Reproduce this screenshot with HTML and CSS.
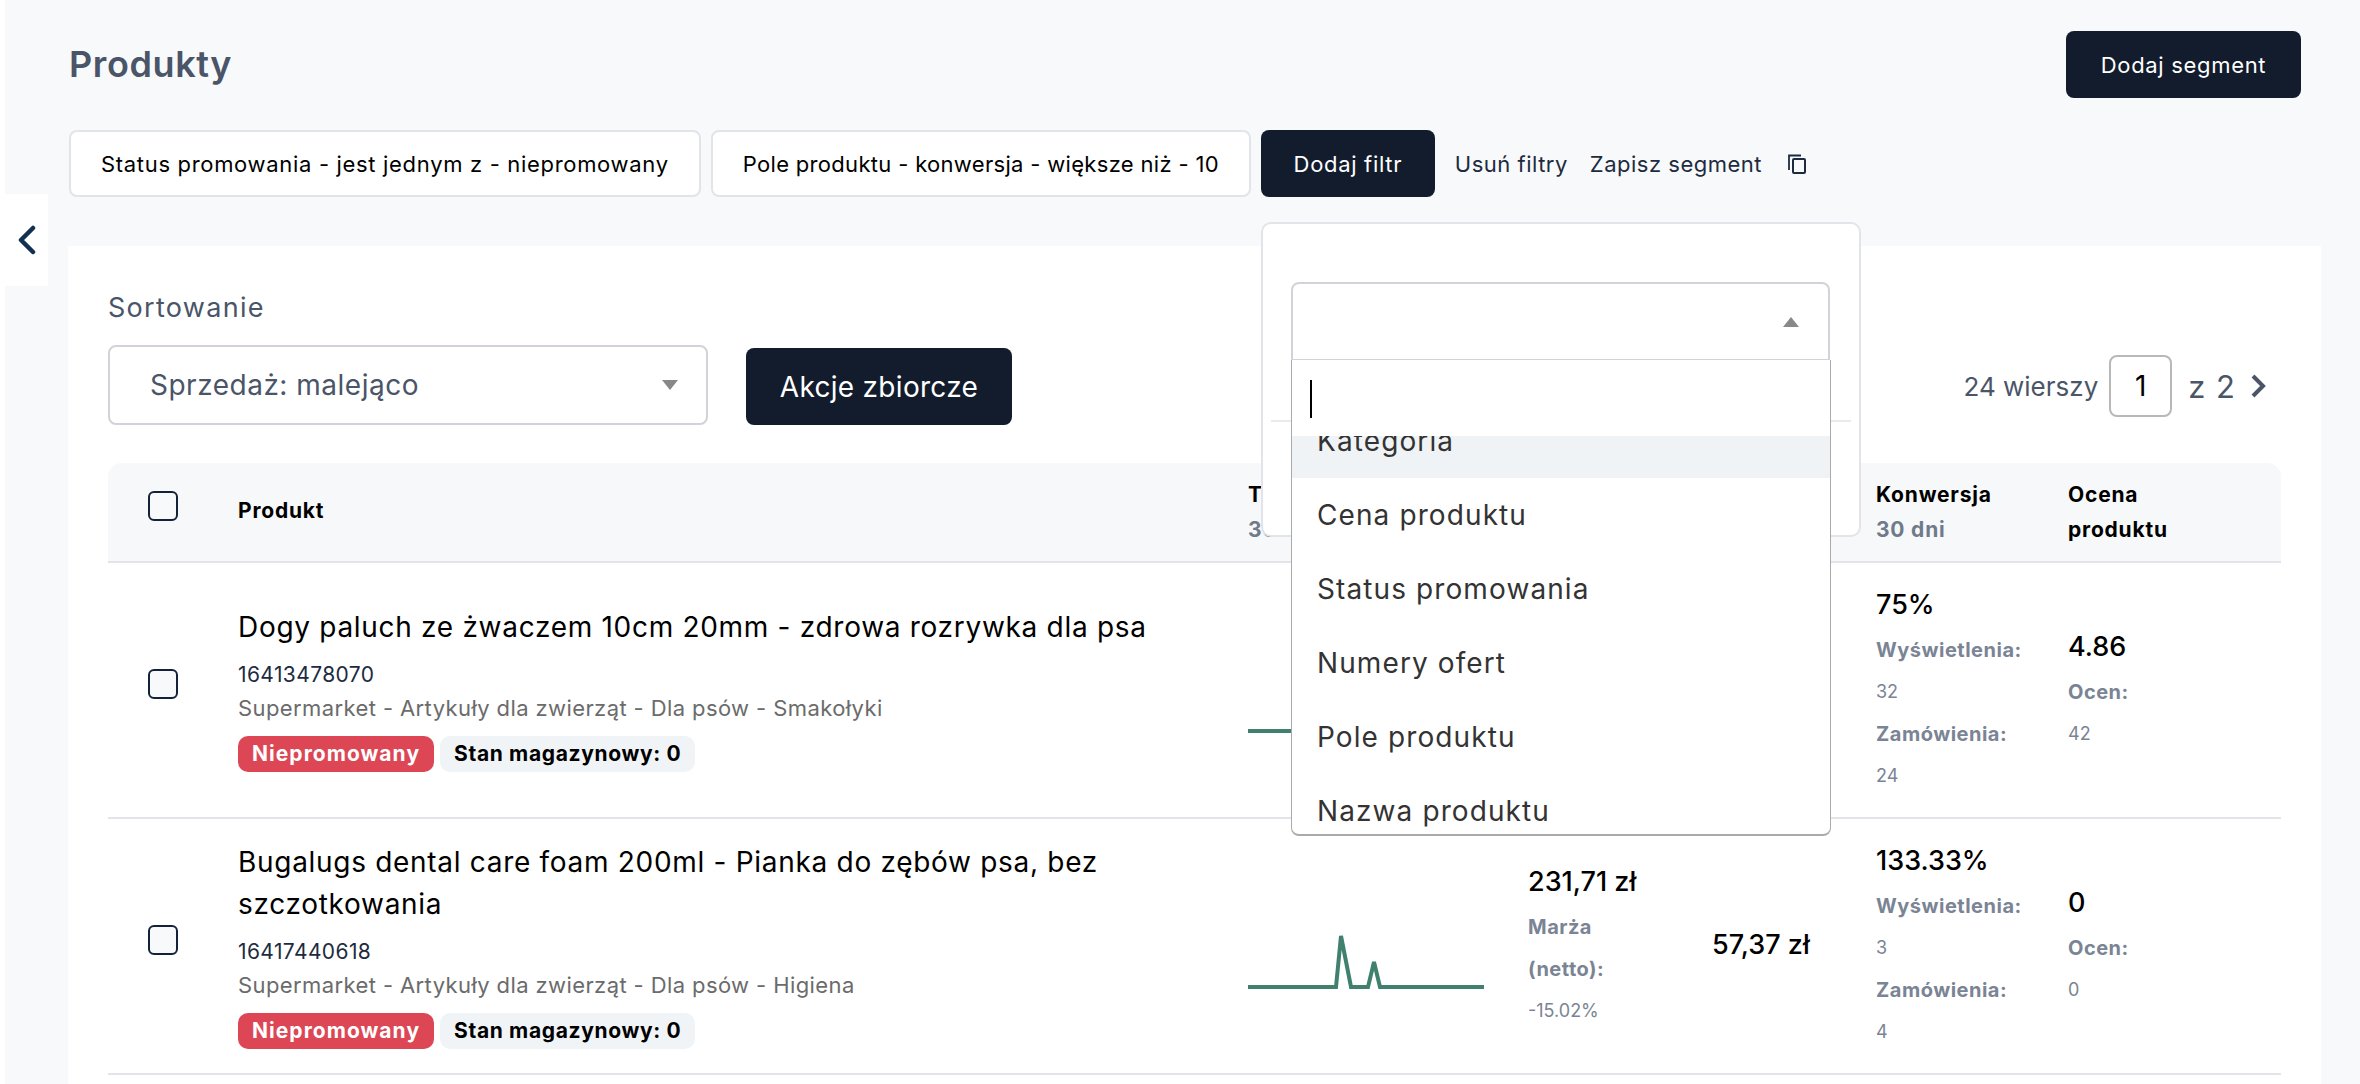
FILE: index.html
```html
<!DOCTYPE html>
<html>
	<head>
		<title>Produkty</title>
		<link rel="stylesheet" href="styles.css">
	</head>
	<body>
		<div class="edge"></div>
		<button class="side-toggle">
			<svg width="22" height="30" viewBox="0 0 22 30"><path d="M17 3 L5 15 L17 27" fill="none" stroke="#12304f" stroke-width="4.5" stroke-linecap="round" stroke-linejoin="round"/></svg>
		</button>

		<div class="page">
			<div class="top">
				<h1>Produkty</h1>
				<a class="btn btn-segment">Dodaj segment</a>
			</div>

			<div class="filters">
				<div class="chip">Status promowania - jest jednym z - niepromowany</div>
				<div class="chip chip-tight">Pole produktu - konwersja - większe niż - 10</div>
				<a class="btn btn-filter">Dodaj filtr</a>
				<a class="link link-remove">Usuń filtry</a>
				<a class="link link-save">Zapisz segment</a>
				<svg class="copy" width="18" height="20" viewBox="0 0 18 20"><path d="M1 16 V1.500 H13" fill="none" stroke="#1d2b40" stroke-width="1.800"/><rect x="5" y="5" width="12" height="14" rx="1" fill="none" stroke="#1d2b40" stroke-width="2"/></svg>
			</div>

			<div class="card">
				<div class="label">Sortowanie</div>
				<div class="toolbar">
					<div class="sort-select">Sprzedaż: malejąco<span class="arrow-down"></span></div>
					<a class="btn btn-bulk">Akcje zbiorcze</a>
					<div class="pager">
						<span>24 wierszy</span>
						<span class="page-input">1</span>
						<span class="pager-total">z 2</span>
						<svg width="18" height="26" viewBox="0 0 18 26"><path d="M4 3 L14 13 L4 23" fill="none" stroke="#4a5568" stroke-width="4"/></svg>
					</div>
				</div>

				<div class="grid head">
					<div class="cell-check"><span class="check"></span></div>
					<div class="head-single">Produkt</div>
					<div>Trend<small>30 dni</small></div>
					<div></div>
					<div></div>
					<div>Konwersja<small>30 dni</small></div>
					<div class="head-last">Ocena produktu</div>
				</div>

				<div class="grid row">
					<div class="cell-check"><span class="check"></span></div>
					<div class="product">
						<div class="name">Dogy paluch ze żwaczem 10cm 20mm - zdrowa rozrywka dla psa</div>
						<div class="offer">16413478070</div>
						<div class="path">Supermarket - Artykuły dla zwierząt - Dla psów - Smakołyki</div>
						<div class="tags"><span class="tag tag-red">Niepromowany</span><span class="tag">Stan magazynowy: 0</span></div>
					</div>
					<div class="chart">
						<svg width="236" height="60" viewBox="0 0 236 60"><path d="M0 53 H236" fill="none" stroke="#40806f" stroke-width="4"/></svg>
					</div>
					<div></div>
					<div></div>
					<div class="stats">
						<div class="big">75%</div>
						<div class="key">Wyświetlenia:</div>
						<div class="val">32</div>
						<div class="key">Zamówienia:</div>
						<div class="val">24</div>
					</div>
					<div class="stats">
						<div class="big">4.86</div>
						<div class="key">Ocen:</div>
						<div class="val">42</div>
					</div>
				</div>

				<div class="grid row">
					<div class="cell-check"><span class="check"></span></div>
					<div class="product">
						<div class="name">Bugalugs dental care foam 200ml - Pianka do zębów psa, bez szczotkowania</div>
						<div class="offer">16417440618</div>
						<div class="path">Supermarket - Artykuły dla zwierząt - Dla psów - Higiena</div>
						<div class="tags"><span class="tag tag-red">Niepromowany</span><span class="tag">Stan magazynowy: 0</span></div>
					</div>
					<div class="chart">
						<svg width="236" height="60" viewBox="0 0 236 60"><path d="M0 53 H88 L93 2 L103 53 H120 L126 28 L132 53 H236" fill="none" stroke="#40806f" stroke-width="4"/></svg>
					</div>
					<div class="stats">
						<div class="big">231,71 zł</div>
						<div class="key">Marża<br>(netto):</div>
						<div class="val">-15.02%</div>
					</div>
					<div class="stats"><div class="big">57,37 zł</div></div>
					<div class="stats">
						<div class="big">133.33%</div>
						<div class="key">Wyświetlenia:</div>
						<div class="val">3</div>
						<div class="key">Zamówienia:</div>
						<div class="val">4</div>
					</div>
					<div class="stats">
						<div class="big">0</div>
						<div class="key">Ocen:</div>
						<div class="val">0</div>
					</div>
				</div>
			</div>
		</div>

		<!-- filter popover with opened select -->
		<div class="popover">
			<div class="pop-select"><span class="arrow-up"></span></div>
			<div class="pop-line"></div>
		</div>
		<div class="dropdown">
			<div class="search"><span class="caret"></span></div>
			<div class="options">
				<div class="option option-active">Kategoria</div>
				<div class="option">Cena produktu</div>
				<div class="option">Status promowania</div>
				<div class="option">Numery ofert</div>
				<div class="option">Pole produktu</div>
				<div class="option">Nazwa produktu</div>
			</div>
		</div>
	</body>
</html>
```

FILE: styles.css
```css
html, body {
	margin: 0;
	height: 1084px;
	overflow: hidden;
}

body {
	background: #f8f9fb;
	font-family: "Inter", "Open Sans", sans-serif;
	color: #000;
	position: relative;
}

.edge {
	position: absolute;
	left: 0;
	top: 0;
	bottom: 0;
	width: 5px;
	background: #fff;
}

.side-toggle {
	position: absolute;
	left: 5px;
	top: 194px;
	width: 43px;
	height: 92px;
	border: 0;
	padding: 0;
	background: #fff;
	display: flex;
	align-items: center;
	justify-content: center;
}

.page {
	padding: 31px 59px 0 69px;
}

.top {
	display: flex;
	justify-content: space-between;
	align-items: center;
	height: 67px;
}

h1 {
	margin: -2px 0 0 0;
	font-size: 36px;
	font-weight: 600;
	letter-spacing: 0.6px;
	color: #4a5568;
}

.btn {
	display: flex;
	align-items: center;
	justify-content: center;
	background: #121c2d;
	color: #fff;
	border-radius: 8px;
	font-size: 22px;
	letter-spacing: 0.68px;
	box-sizing: border-box;
}

.btn-segment {
	width: 235px;
	height: 67px;
}

.filters {
	display: flex;
	align-items: center;
	margin-top: 32px;
	height: 67px;
}

.chip {
	height: 67px;
	box-sizing: border-box;
	display: flex;
	align-items: center;
	padding: 0 30px;
	background: #fff;
	border: 2px solid #e2e4ea;
	border-radius: 8px;
	font-size: 22px;
	letter-spacing: 0.68px;
	white-space: nowrap;
	margin-right: 10px;
}

.chip-tight {
	letter-spacing: 0.32px;
}

.btn-filter {
	width: 174px;
	height: 67px;
}

.link {
	font-size: 22px;
	letter-spacing: 0.5px;
	color: #1d2b40;
	white-space: nowrap;
}

.link-remove {
	margin-left: 20px;
}

.link-save {
	margin-left: 22px;
}

.copy {
	margin-left: 26px;
}

.card {
	margin: 49px -20px 0 -1px;
	background: #fff;
	padding: 40px 40px 0 40px;
	height: 900px;
}

.label {
	font-size: 27px;
	letter-spacing: 1.3px;
	color: #4a5568;
	line-height: 42px;
	padding-top: 1px;
}

.toolbar {
	display: flex;
	align-items: flex-end;
	margin-top: 16px;
	height: 80px;
}

.sort-select {
	width: 600px;
	height: 80px;
	box-sizing: border-box;
	border: 2px solid #d0d4da;
	border-radius: 8px;
	padding: 0 40px;
	display: flex;
	align-items: center;
	justify-content: space-between;
	font-size: 28px;
	letter-spacing: 0.5px;
	color: #4a5568;
}

.arrow-down {
	width: 0;
	height: 0;
	border: 8px solid transparent;
	border-top: 10px solid #888;
	border-bottom: 0;
	margin-right: -12px;
}

.btn-bulk {
	width: 266px;
	height: 77px;
	margin-left: 38px;
	font-size: 28px;
	letter-spacing: 0.3px;
}

.pager {
	margin-left: auto;
	display: flex;
	align-items: center;
	height: 62px;
	margin-bottom: 8px;
	margin-right: 14px;
	font-size: 26px;
	color: #4a5568;
}

.page-input {
	width: 63px;
	height: 62px;
	box-sizing: border-box;
	border: 2px solid #b8b8b8;
	border-radius: 8px;
	margin-left: 11px;
	display: flex;
	align-items: center;
	justify-content: center;
	font-size: 28px;
	color: #000;
}

.pager-total {
	margin-left: 16px;
	margin-right: 13px;
	font-size: 31px;
	letter-spacing: 1px;
}

.grid {
	display: grid;
	grid-template-columns: 130px 1010px 280px 184px 164px 192px 213px;
}

.head {
	margin-top: 38px;
	height: 100px;
	box-sizing: border-box;
	background: #f7f8fa;
	border-radius: 14px 14px 0 0;
	border-bottom: 2px solid #e2e4ea;
	font-size: 21px;
	letter-spacing: 0.8px;
	font-weight: 700;
	line-height: 35px;
	padding-top: 14px;
}

.head small {
	display: block;
	font-size: 21px;
	color: #6f7a8a;
}

.head-single {
	padding-top: 16px;
}

.head-last {
	padding-right: 60px;
}

.head .cell-check {
	align-items: flex-start;
	padding-top: 14px;
	padding-bottom: 0;
}

.cell-check {
	display: flex;
	align-items: center;
	padding-left: 40px;
	padding-bottom: 12px;
}

.check {
	width: 30px;
	height: 30px;
	box-sizing: border-box;
	border: 2px solid #14213a;
	border-radius: 6px;
	background: #f8f9fb;
}

.row {
	height: 256px;
	box-sizing: border-box;
	border-bottom: 2px solid #e2e4ea;
}

.product {
	display: flex;
	flex-direction: column;
	justify-content: center;
	padding-bottom: 3px;
}

.name {
	font-size: 28px;
	letter-spacing: 0.7px;
	line-height: 42px;
	padding-right: 60px;
	margin-bottom: 10px;
}

.offer {
	font-size: 21px;
	letter-spacing: 0.4px;
	line-height: 34px;
	color: #1d2b40;
}

.path {
	font-size: 22px;
	letter-spacing: 0.4px;
	line-height: 32px;
	color: #6b6b6b;
	margin-bottom: 12px;
}

.tags {
	display: flex;
	gap: 6px;
}

.tag {
	height: 36px;
	padding: 0 14px;
	display: flex;
	align-items: center;
	border-radius: 10px;
	background: #f1f4f7;
	font-size: 21px;
	letter-spacing: 0.65px;
	font-weight: 700;
}

.tag-red {
	background: #dc4655;
	color: #fff;
	letter-spacing: 1.05px;
}

.chart {
	display: flex;
	align-items: center;
	padding-top: 36px;
}

.stats {
	display: flex;
	flex-direction: column;
	justify-content: center;
}

.big {
	font-size: 27px;
	font-weight: 500;
	line-height: 42px;
	margin-bottom: 3px;
}

.key {
	font-size: 20px;
	letter-spacing: 0.5px;
	font-weight: 700;
	line-height: 42px;
	color: #7a8494;
}

.val {
	font-size: 18px;
	line-height: 42px;
	color: #7a8494;
}

.popover {
	position: absolute;
	left: 1261px;
	top: 222px;
	width: 600px;
	height: 315px;
	box-sizing: border-box;
	background: #fff;
	border: 2px solid #e2e4ea;
	border-radius: 10px;
	padding: 58px 29px 0 28px;
}

.pop-select {
	height: 80px;
	box-sizing: border-box;
	border: 2px solid #d0d4da;
	border-bottom-width: 3px;
	border-radius: 8px 8px 0 0;
	position: relative;
}

.arrow-up {
	position: absolute;
	right: 29px;
	top: 33px;
	width: 0;
	height: 0;
	border: 8px solid transparent;
	border-bottom: 10px solid #888;
	border-top: 0;
}

.pop-line {
	position: absolute;
	left: 8px;
	right: 8px;
	top: 196px;
	height: 2px;
	background: #e8eaee;
}

.dropdown {
	position: absolute;
	left: 1291px;
	top: 360px;
	width: 540px;
	height: 476px;
	box-sizing: border-box;
	background: #fff;
	border: 1px solid #aaa;
	border-top: 0;
	border-bottom-width: 2px;
	border-radius: 0 0 8px 8px;
	overflow: hidden;
	display: flex;
	flex-direction: column;
}

.search {
	height: 76px;
	flex: none;
	background: #fff;
	padding: 20px 0 0 18px;
	box-sizing: border-box;
	position: relative;
	z-index: 1;
}

.caret {
	display: block;
	width: 2px;
	height: 38px;
	background: #000;
}

.options {
	margin-top: -32px;
}

.option {
	height: 74px;
	display: flex;
	align-items: center;
	padding-left: 25px;
	font-size: 28px;
	letter-spacing: 1.1px;
	color: #333;
}

.option-active {
	background: #eff3f6;
}
```
